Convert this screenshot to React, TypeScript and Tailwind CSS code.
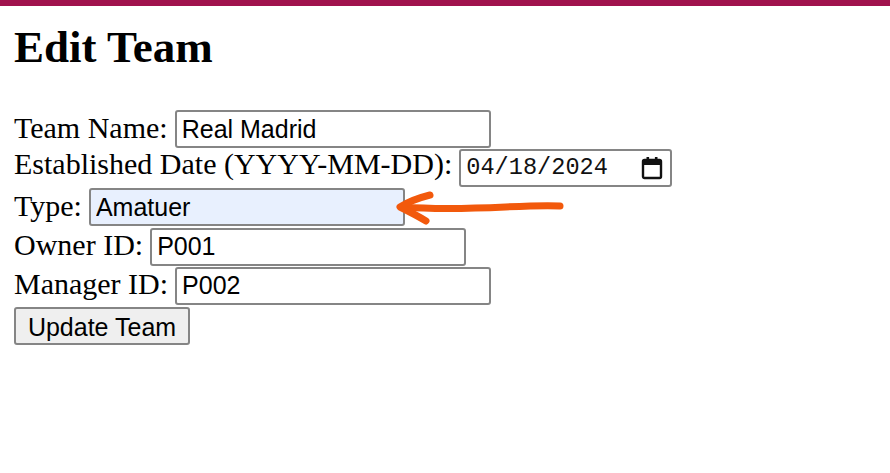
const serif = "font-['Liberation_Serif','Times_New_Roman',serif]";
const sans = "font-['Liberation_Sans',Arial,sans-serif]";

const fieldClass =
  'h-[38px] rounded-[3px] border-2 border-[#858585] px-[5px] text-[25px] text-black outline-none ' + sans;

function Row({ label, children }: { label: string; children: React.ReactNode }) {
  return (
    <div className="flex h-[39.2px] items-baseline gap-[7px]">
      <label className="text-[30px] leading-none text-black">{label}</label>
      {children}
    </div>
  );
}

function CalendarIcon() {
  return (
    <svg width="22" height="24" viewBox="0 0 22 24" fill="none">
      <rect x="2" y="4" width="18" height="18" rx="1.5" stroke="#111" strokeWidth="2.4" />
      <rect x="2" y="4" width="18" height="5" fill="#111" />
      <rect x="5.5" y="1" width="2.6" height="5" fill="#111" />
      <rect x="13.9" y="1" width="2.6" height="5" fill="#111" />
    </svg>
  );
}

export default function App() {
  return (
    <div className={'relative min-h-[473px] w-[890px] bg-white ' + serif}>
      <div className="h-[6px] bg-[#a0124d]" />
      <div className="px-[14px]">
        <h1 className="mt-[19px] mb-[41px] h-[44px] text-[45px] font-bold leading-none text-black">
          Edit Team
        </h1>
        <form className="flex flex-col">
          <Row label="Team Name:">
            <input className={fieldClass + ' w-[316px] bg-white'} defaultValue="Real Madrid" />
          </Row>
          <Row label="Established Date (YYYY-MM-DD):">
            <div className="flex h-[38px] w-[213px] items-center justify-between rounded-[3px] border-2 border-[#858585] bg-white pl-[5px] pr-[7px]">
              <span className="font-['Liberation_Mono','DejaVu_Sans_Mono',monospace] text-[23.6px] leading-none text-[#111]">
                04/18/2024
              </span>
              <CalendarIcon />
            </div>
          </Row>
          <Row label="Type:">
            <input
              className={fieldClass + ' w-[316px] border-[#7a7a7a] bg-[#e8f0fe]'}
              defaultValue="Amatuer"
            />
          </Row>
          <Row label="Owner ID:">
            <input className={fieldClass + ' w-[316px] bg-white'} defaultValue="P001" />
          </Row>
          <Row label="Manager ID:">
            <input className={fieldClass + ' w-[316px] bg-white'} defaultValue="P002" />
          </Row>
          <div className="pt-[1px]">
            <button
              type="button"
              className={
                'h-[38px] w-[176px] rounded-[3px] border-2 border-[#858585] bg-[#efefef] text-[25px] text-black ' +
                sans
              }
            >
              Update Team
            </button>
          </div>
        </form>
      </div>

      <svg className="pointer-events-none absolute left-0 top-0" width="890" height="473">
        <g stroke="#f2590c" strokeWidth="7" strokeLinecap="round" strokeLinejoin="round" fill="none">
          <path d="M560 206 C 520 204, 470 212, 402 207" />
          <path d="M430 195 C 418 198, 408 202, 400 207 C 410 212, 418 216, 426 221" />
        </g>
      </svg>
    </div>
  );
}
